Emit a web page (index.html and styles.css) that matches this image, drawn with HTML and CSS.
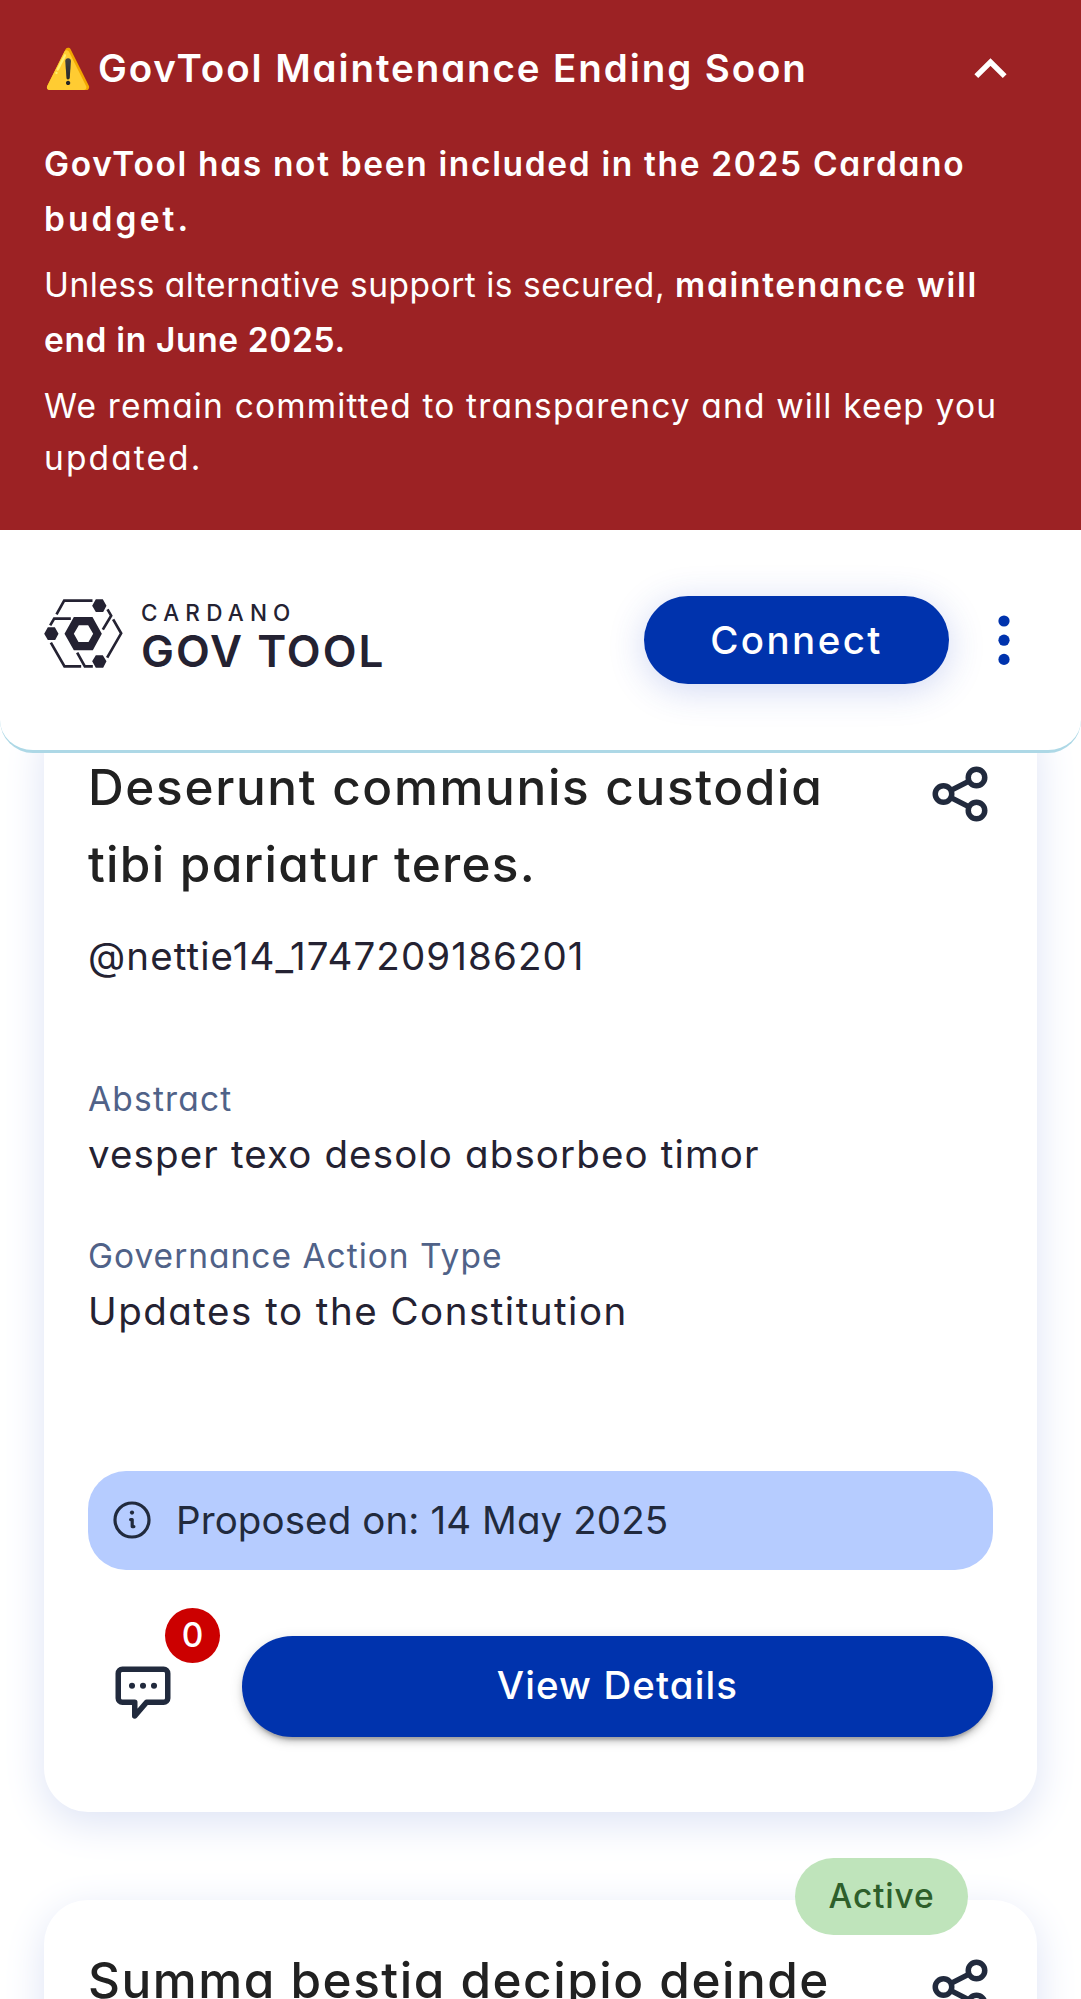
FILE: index.html
```html
<!DOCTYPE html>
<html lang="en">
<head>
<meta charset="utf-8">
<title>GovTool</title>
<link rel="stylesheet" href="styles.css">
</head>
<body>
<section class="banner">
  <div class="banner-head">
    <span class="banner-emoji">⚠️</span>
    <h2 class="banner-title">GovTool Maintenance Ending Soon</h2>
    <svg class="chevron" viewBox="0 0 33 21"><path d="M2.3 18.2 16.5 4l14.2 14.2" fill="none" stroke="#fff" stroke-width="5.4"/></svg>
  </div>
  <p class="lead"><span class="line s-lead">GovTool has not been included in the 2025 Cardano</span><span class="line s-budget">budget.</span></p>
  <p class="support"><span class="line s-unless">Unless alternative support is secured, <strong class="s-maint">maintenance will</strong></span><strong class="line s-june">end in June 2025.</strong></p>
  <p class="commit"><span class="line s-commit">We remain committed to transparency and will keep you</span><span class="line s-updated">updated.</span></p>
</section>

<header class="header">
  <div class="logo">
    <svg class="logo-mark" viewBox="132 296 236 208" fill="#242232">
      <path d="M276 316l11-19h21l11 19-10 19h-22zM132 400l11-19h21l11 19-10 19h-22zM276 483l11-18h21l11 18-10 19h-22z"/>
      <path fill-rule="evenodd" d="M193 400l28-50h56l28 50-27 50h-57zM221 400l14 25h30l14-25-15-25h-28z"/>
      <g fill="none" stroke="#242232" stroke-width="8">
        <path d="M169 342l23-41h85M150 375l12-20h50M322 327l11 19-25 42M339 357l24 42-42 73M152 427l41 71h50M231 457l23 41h24"/>
      </g>
    </svg>
    <div class="logo-text">
      <span class="logo-top">CARDANO</span>
      <span class="logo-name">GOV TOOL</span>
    </div>
  </div>
  <button class="connect">Connect</button>
  <svg class="dots" viewBox="0 0 12 50" fill="#0033ad"><circle cx="6" cy="6" r="5.6"/><circle cx="6" cy="25.2" r="5.6"/><circle cx="6" cy="44.4" r="5.6"/></svg>
</header>

<main class="list">
  <article class="card">
    <div class="card-head">
      <h3 class="card-title"><span class="line s-t1">Deserunt communis custodia</span><span class="line s-t2">tibi pariatur teres.</span></h3>
      <svg class="share" viewBox="0 0 24 24"><g fill="none" stroke="#212a3d" stroke-width="2"><circle cx="18" cy="6" r="3"/><circle cx="6" cy="12" r="3"/><circle cx="18" cy="18" r="3"/><path d="M8.7 10.7l6.6-3.4M8.7 13.3l6.6 3.4"/></g></svg>
    </div>
    <p class="handle">@nettie14_1747209186201</p>
    <dl class="facts">
      <div class="fact"><dt class="s-abs">Abstract</dt><dd class="s-vesper">vesper texo desolo absorbeo timor</dd></div>
      <div class="fact"><dt class="s-gov">Governance Action Type</dt><dd class="s-upd">Updates to the Constitution</dd></div>
    </dl>
    <div class="proposed">
      <svg class="info" viewBox="0 0 44 44"><g fill="none" stroke="#212a3d" stroke-width="3.2" stroke-linecap="round" stroke-linejoin="round"><circle cx="22" cy="22" r="17"/><path d="M20.6 21.6h1.6v7h1.7"/></g><circle cx="22" cy="14.6" r="2.1" fill="#212a3d"/></svg>
      <span>Proposed on: 14 May 2025</span>
    </div>
    <div class="actions">
      <div class="comments">
        <svg class="chat" viewBox="0 0 24 24"><path d="M19.5 3h-15A1.5 1.5 0 0 0 3 4.5v9A1.5 1.5 0 0 0 4.5 15H9v5l4.3-5h6.2a1.5 1.5 0 0 0 1.5-1.5v-9A1.5 1.5 0 0 0 19.5 3z" fill="none" stroke="#212a3d" stroke-width="2" stroke-linejoin="round"/><g fill="#212a3d"><circle cx="8" cy="9" r="1.1"/><circle cx="12" cy="9" r="1.1"/><circle cx="16" cy="9" r="1.1"/></g></svg>
        <span class="count">0</span>
      </div>
      <button class="details">View Details</button>
    </div>
  </article>

  <article class="card">
    <span class="status">Active</span>
    <div class="card-head">
      <h3 class="card-title"><span class="line s-t3">Summa bestia decipio deinde</span></h3>
      <svg class="share" viewBox="0 0 24 24"><g fill="none" stroke="#212a3d" stroke-width="2"><circle cx="18" cy="6" r="3"/><circle cx="6" cy="12" r="3"/><circle cx="18" cy="18" r="3"/><path d="M8.7 10.7l6.6-3.4M8.7 13.3l6.6 3.4"/></g></svg>
    </div>
  </article>
</main>
</body>
</html>
```
FILE: styles.css
```css
* { box-sizing: border-box; margin: 0; padding: 0; }
html { height: 1999px; overflow: hidden; }
body {
  height: 1999px;
  overflow: hidden;
  background: #fff;
  color: #242232;
  font-family: Inter, "Open Sans", sans-serif;
  font-feature-settings: "cv11";
  font-size: 38.5px;
}
button { border: 0; font: inherit; font-feature-settings: inherit; color: #fff; background: #0033ad; }
.line { display: block; white-space: nowrap; }

.banner {
  height: 530px;
  padding: 41px 44px 0;
  background: #9c2224;
  color: #fff;
  font-size: 33.5px;
}
.banner-head { display: flex; align-items: center; height: 54px; }
.banner-emoji { width: 54px; font-size: 38.5px; line-height: 54px; }
.banner-title { flex: 1; font-size: 38.5px; font-weight: 600; line-height: 54px; letter-spacing: 1.9px; }
.chevron { width: 33px; height: 21px; margin-right: 30px; }
.lead { margin-top: 41.5px; line-height: 55px; font-weight: 600; }
.support { margin-top: 11px; line-height: 55.3px; }
.support strong { font-weight: 600; }
.commit { margin-top: 11.5px; line-height: 52px; }
.s-lead { letter-spacing: 1.65px; }
.s-budget { letter-spacing: 3.1px; }
.s-unless { letter-spacing: .52px; }
.s-maint { letter-spacing: 1.7px; }
.s-june { letter-spacing: .65px; }
.s-commit { letter-spacing: 1.16px; }
.s-updated { letter-spacing: 2.1px; }

.header {
  position: relative;
  z-index: 2;
  display: flex;
  align-items: center;
  height: 223px;
  padding: 0 71px 0 44px;
  background: #fff;
  border-bottom: 3px solid #add8e6;
  border-radius: 0 0 33px 33px;
}
.logo { display: flex; flex: 1; height: 69px; margin-bottom: 14px; gap: 18px; }
.logo-mark { width: 79px; height: 69.3px; }
.logo-text { padding-top: 2px; }
.logo-top { display: block; font-size: 22.5px; font-weight: 500; line-height: 24px; letter-spacing: 6.2px; }
.logo-name { display: block; margin-top: 2px; font-size: 44px; font-weight: 620; line-height: 48px; letter-spacing: 2px; white-space: nowrap; }
.connect {
  width: 305px;
  height: 88px;
  margin-right: 49px;
  border-radius: 44px;
  font-weight: 500;
  letter-spacing: 2.4px;
  box-shadow: 0 6px 36px rgba(47, 78, 200, .22);
}
.dots { width: 12px; height: 50px; }

.list { display: flex; flex-direction: column; gap: 88px; margin-top: -46.5px; padding: 0 44px; }
.card {
  position: relative;
  padding: 42.5px 44px 75px;
  border-radius: 44px;
  background: #fff;
  box-shadow: 0 11px 41px #dde3f5;
}
.card-head { display: flex; justify-content: space-between; align-items: flex-start; }
.card-title { font-size: 49.5px; font-weight: 540; line-height: 77px; color: #212121; }
.s-t1 { letter-spacing: 1.65px; }
.s-t2 { letter-spacing: 1.25px; }
.s-t3 { letter-spacing: 1.5px; }
.share { flex: none; width: 66px; height: 66px; margin-top: 12px; }
.handle { margin-top: 26px; line-height: 55px; letter-spacing: 1.1px; }
.facts { display: flex; flex-direction: column; gap: 48.5px; margin-top: 90px; }
.fact dt { font-size: 33.5px; line-height: 50px; color: #506288; }
.fact dd { margin-top: 3px; line-height: 55px; }
.s-abs { letter-spacing: 1.2px; }
.s-vesper { letter-spacing: 1.13px; }
.s-gov { letter-spacing: 1px; }
.s-upd { letter-spacing: 1.5px; }
.proposed {
  display: flex;
  align-items: center;
  gap: 22px;
  height: 99px;
  margin-top: 132px;
  padding-left: 22px;
  border-radius: 38px;
  background: #b6ccff;
  color: #212a3d;
  letter-spacing: .1px;
}
.info { width: 44px; height: 44px; }
.actions { display: flex; gap: 44px; height: 101px; margin-top: 66px; }
.comments { position: relative; display: flex; justify-content: center; width: 110px; padding-top: 25px; }
.chat { width: 66px; height: 66px; }
.count {
  position: absolute;
  left: 77px;
  top: -28px;
  width: 55px;
  height: 55px;
  border-radius: 50%;
  background: #c00;
  color: #fff;
  font-size: 33.5px;
  font-weight: 500;
  line-height: 55px;
  text-align: center;
}
.details {
  flex: 1;
  padding-bottom: 3px;
  border-radius: 51px;
  font-weight: 500;
  letter-spacing: 1.1px;
  box-shadow: 0 8px 3px -5px rgba(0, 0, 0, .2), 0 5px 6px rgba(0, 0, 0, .14), 0 3px 14px rgba(0, 0, 0, .12);
}
.status {
  position: absolute;
  top: -41.5px;
  right: 69px;
  width: 173px;
  height: 77px;
  border-radius: 38.5px;
  background: #bfe4bb;
  color: #2e5f2b;
  font-size: 33.5px;
  font-weight: 500;
  line-height: 77px;
  letter-spacing: .8px;
  text-align: center;
}
```
